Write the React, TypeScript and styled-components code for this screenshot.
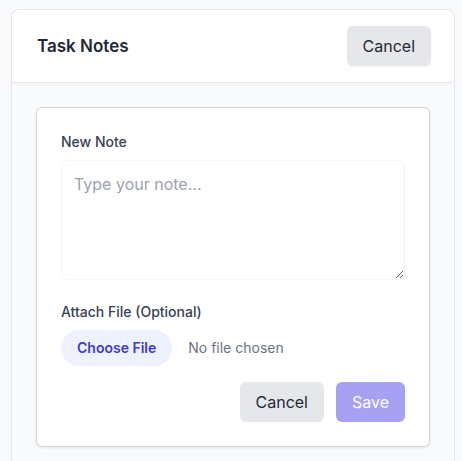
import React from 'react';
import styled, {createGlobalStyle} from "styled-components";

const GlobalStyle = createGlobalStyle`
  body {
    margin: 0;
    background: #f8f9fb;
    font-family: Inter, "Noto Sans", "Liberation Sans", sans-serif;
    color: #1f2937;
  }
  * {
    box-sizing: border-box;
  }
`

export default function App() {
    return (
        <>
            <GlobalStyle/>
            <StyledPage>
                <StyledPanel>
                    <StyledPanelHeader>
                        <StyledPanelTitle>Task Notes</StyledPanelTitle>
                        <StyledButton $variant="secondary" $shadow>Cancel</StyledButton>
                    </StyledPanelHeader>
                    <StyledPanelBody>
                        <StyledNoteCard>
                            <StyledField>
                                <StyledLabel htmlFor="note">New Note</StyledLabel>
                                <StyledTextarea id="note" rows={4} placeholder="Type your note..."/>
                            </StyledField>
                            <StyledField>
                                <StyledLabel as="span">Attach File (Optional)</StyledLabel>
                                <StyledFileRow>
                                    <StyledFileButton>
                                        Choose File
                                        <input type="file" hidden/>
                                    </StyledFileButton>
                                    <StyledFileName>No file chosen</StyledFileName>
                                </StyledFileRow>
                            </StyledField>
                            <StyledActions>
                                <StyledButton $variant="secondary">Cancel</StyledButton>
                                <StyledButton $variant="primary" disabled>Save</StyledButton>
                            </StyledActions>
                        </StyledNoteCard>
                    </StyledPanelBody>
                </StyledPanel>
            </StyledPage>
        </>
    );
}

const StyledPage = styled.div`
  padding: 9px 7px 0 11px;
`
const StyledPanel = styled.div`
  background: #f9fafb;
  border: 1px solid #e5e7eb;
  border-radius: 8px 8px 0 0;
  border-bottom: none;
  min-height: 460px;
`
const StyledPanelHeader = styled.div`
  display: flex;
  align-items: center;
  justify-content: space-between;
  padding: 16px 23px 16px 25px;
  background: #fff;
  border-bottom: 1px solid #e5e7eb;
  border-radius: 8px 8px 0 0;
`
const StyledPanelTitle = styled.h2`
  margin: 0;
  font-size: 17px;
  line-height: 28px;
  font-weight: 600;
  color: #1f2937;
`
const StyledButton = styled.button<{ $variant: "primary" | "secondary", $shadow?: boolean }>`
  font-family: inherit;
  font-size: 16px;
  line-height: 24px;
  padding: 8px 16px;
  border: none;
  border-radius: 6px;
  background: ${p => p.$variant === "primary" ? "#a7a1f4" : "#e5e7eb"};
  color: ${p => p.$variant === "primary" ? "#fff" : "#1f2937"};
  box-shadow: ${p => p.$shadow ? "0 1px 2px rgba(0, 0, 0, 0.06)" : "none"};
  cursor: pointer;

  &:disabled {
    cursor: not-allowed;
  }
`
const StyledPanelBody = styled.div`
  padding: 24px 24px 0 24px;
`
const StyledNoteCard = styled.div`
  background: #fff;
  border: 1px solid #d1d5db;
  border-radius: 6px;
  box-shadow: 0 1px 3px rgba(0, 0, 0, 0.08);
  padding: 24px;
  display: flex;
  flex-direction: column;
`
const StyledField = styled.div`
  display: flex;
  flex-direction: column;
  margin-bottom: 16px;

  &:first-child {
    margin-bottom: 22px;
  }
`
const StyledLabel = styled.label`
  font-size: 14px;
  line-height: 20px;
  font-weight: 500;
  color: #374151;
  margin-bottom: 8px;
`
const StyledTextarea = styled.textarea`
  font-family: inherit;
  font-size: 16px;
  line-height: 24px;
  padding: 11px 12px;
  height: 120px;
  border: 1px solid #f3f4f6;
  border-radius: 6px;
  color: #1f2937;
  resize: vertical;
  outline: none;

  &::placeholder {
    color: #9ca3af;
  }
`
const StyledFileRow = styled.div`
  display: flex;
  align-items: center;
  gap: 16px;
`
const StyledFileButton = styled.label`
  display: inline-flex;
  align-items: center;
  padding: 8px 16px;
  border-radius: 9999px;
  background: #eef2ff;
  color: #4338ca;
  font-size: 14px;
  line-height: 20px;
  font-weight: 600;
  cursor: pointer;
`
const StyledFileName = styled.span`
  font-size: 14px;
  line-height: 20px;
  color: #6b7280;
`
const StyledActions = styled.div`
  display: flex;
  justify-content: flex-end;
  gap: 12px;
`
